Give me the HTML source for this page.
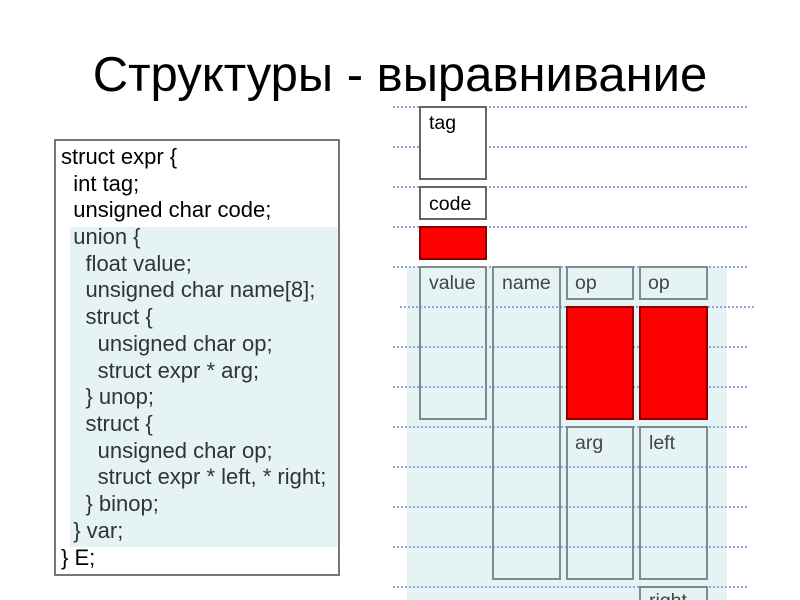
<!DOCTYPE html>
<html><head><meta charset="utf-8"><style>
html,body{margin:0;width:800px;height:600px;overflow:hidden}
body{background:#fff;position:relative;font-family:"Liberation Sans",sans-serif}
.a{position:absolute}
h1{position:absolute;left:0;width:800px;top:45px;margin:0;text-align:center;font-weight:normal;font-size:49px;line-height:60px;color:#000}
.dl{position:absolute;height:0;border-top:2px dotted #8fa4e0}
.bx{position:absolute;box-sizing:border-box;border:2px solid #7f8a8c;font-size:19.5px;line-height:22px;color:#444;padding:4px 0 0 8px}
.bk{border-color:#666;color:#000}
.red{position:absolute;box-sizing:border-box;background:#f00;border:2px solid #800}
pre{margin:0;font-family:"Liberation Sans",sans-serif;font-size:22px;line-height:26.7px}
</style></head><body>
<h1>Структуры - выравнивание</h1>
<div class="a" style="left:407px;top:267px;width:320px;height:333px;background:#e5f3f5"></div>
<div class="dl" style="left:393px;top:106px;width:354px"></div>
<div class="dl" style="left:393px;top:146px;width:354px"></div>
<div class="dl" style="left:393px;top:186px;width:354px"></div>
<div class="dl" style="left:393px;top:226px;width:354px"></div>
<div class="dl" style="left:393px;top:266px;width:354px"></div>
<div class="dl" style="left:400px;top:306px;width:354px"></div>
<div class="dl" style="left:393px;top:346px;width:354px"></div>
<div class="dl" style="left:393px;top:386px;width:354px"></div>
<div class="dl" style="left:393px;top:426px;width:354px"></div>
<div class="dl" style="left:393px;top:466px;width:354px"></div>
<div class="dl" style="left:393px;top:506px;width:354px"></div>
<div class="dl" style="left:393px;top:546px;width:354px"></div>
<div class="dl" style="left:393px;top:586px;width:354px"></div>
<div class="bx bk" style="left:419px;top:106px;width:68px;height:74px;background:#fff">tag</div>
<div class="bx bk" style="left:419px;top:186px;width:68px;height:34px;padding-top:5px;background:#fff">code</div>
<div class="red" style="left:419px;top:226px;width:68px;height:34px"></div>
<div class="bx" style="left:419px;top:266px;width:68px;height:154px">value</div>
<div class="bx" style="left:492px;top:266px;width:69px;height:314px">name</div>
<div class="bx" style="left:566px;top:266px;width:68px;height:34px;padding-left:7px">op</div>
<div class="red" style="left:566px;top:306px;width:68px;height:114px"></div>
<div class="bx" style="left:566px;top:426px;width:68px;height:154px;padding-left:7px">arg</div>
<div class="bx" style="left:639px;top:266px;width:69px;height:34px;padding-left:7px">op</div>
<div class="red" style="left:639px;top:306px;width:69px;height:114px"></div>
<div class="bx" style="left:639px;top:426px;width:69px;height:154px;padding-left:8px">left</div>
<div class="bx" style="left:639px;top:586px;width:69px;height:14px;border-bottom:none;overflow:hidden;padding-left:8px;padding-top:2px">right</div>
<div class="a" style="left:54px;top:139px;width:286px;height:437px;box-sizing:border-box;border:2px solid #777;background:#fff"></div>
<div class="a" style="left:70px;top:227px;width:268px;height:320px;background:#e5f3f5"></div>
<pre class="a" style="left:61px;top:144px;color:#000">struct expr {
  int tag;
  unsigned char code;</pre>
<pre class="a" style="left:61px;top:224px;color:#333">  union {
    float value;
    unsigned char name[8];
    struct {
      unsigned char op;
      struct expr * arg;
    } unop;
    struct {
      unsigned char op;
      struct expr * left, * right;
    } binop;
  } var;</pre>
<pre class="a" style="left:61px;top:545px;color:#000">} E;</pre>
</body></html>
